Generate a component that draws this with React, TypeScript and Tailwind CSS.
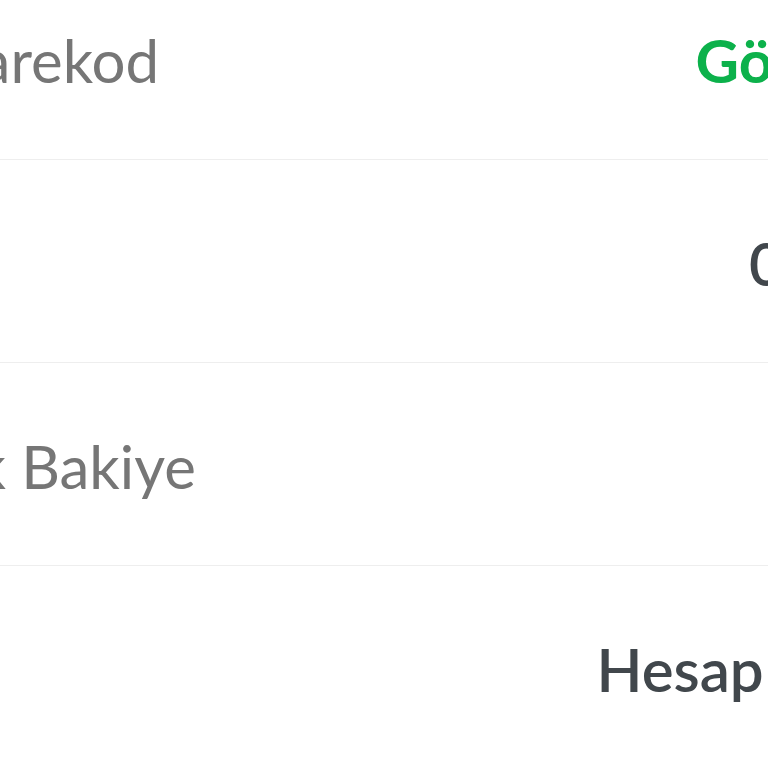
import React from 'react';
import { ChevronRight } from 'lucide-react';

interface Row {
  label?: string;
  value: string;
  accent?: boolean;
}

const rows: Row[] = [
  { label: 'Karekod', value: 'Göster', accent: true },
  { value: '0,00TL' },
  { label: 'Ek Bakiye', value: '' },
  { value: 'Hesap Bilgisi' },
];

export default function App() {
  return (
    <div className="h-screen w-full overflow-hidden bg-white" style={{ fontFamily: 'Lato, "Open Sans", sans-serif' }}>
      <div className="-mt-[43px] -ml-[59px] w-[993px]">
        {rows.map((row, i) => (
          <div
            key={i}
            className="flex h-[203px] items-center justify-between border-b border-[#eeeeee] pt-1 text-[60px] leading-none"
          >
            <span className="whitespace-nowrap text-[#767676]">{row.label}</span>
            {row.accent ? (
              <span className="flex items-center gap-[18px] whitespace-nowrap font-bold text-[#0cb14b]">
                {row.value}
                <ChevronRight className="h-10 w-10" strokeWidth={3} />
              </span>
            ) : (
              <span className="whitespace-nowrap font-semibold text-[#41474c]">{row.value}</span>
            )}
          </div>
        ))}
      </div>
    </div>
  );
}
